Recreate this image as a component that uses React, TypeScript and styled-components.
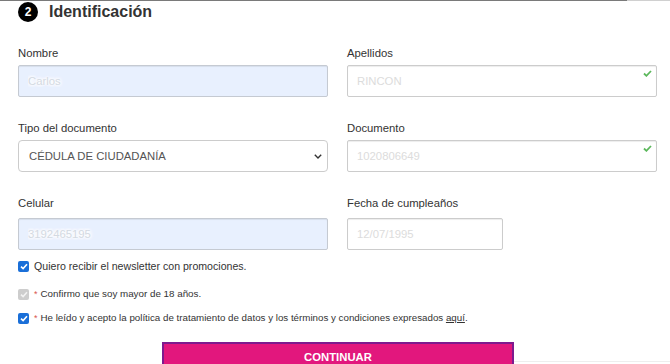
import styled, { createGlobalStyle } from "styled-components"

const GlobalStyle = createGlobalStyle`
  html, body {
    margin: 0;
    padding: 0;
    background: #FFFFFF;
    overflow: hidden;
  }

  body {
    font-family: "Liberation Sans", Arial, sans-serif;
    color: #333333;
  }
`

const TopBar = styled.div`
  display: flex;
  height: 1px;
`

const TopSegment = styled.div<{ $grow: number; $color: string }>`
  flex: ${p => p.$grow};
  background: ${p => p.$color};
`

const Section = styled.section`
  padding: 0 13px 0 18px;
`

const Heading = styled.div`
  display: flex;
  align-items: center;
  gap: 11px;
  height: 20px;
  margin-top: 1px;
`

const StepBadge = styled.span`
  width: 20px;
  height: 20px;
  border-radius: 50%;
  background: #000000;
  color: #FFFFFF;
  font-size: 12px;
  font-weight: 700;
  display: flex;
  align-items: center;
  justify-content: center;
`

const Title = styled.h2`
  margin: 0;
  font-size: 16px;
  font-weight: 700;
  color: #333333;
`

const Grid = styled.div`
  display: grid;
  grid-template-columns: 310px 310px;
  column-gap: 19px;
  row-gap: 25px;
  margin-top: 25px;
`

const Field = styled.div`
  display: flex;
  flex-direction: column;
`

const Label = styled.label<{ $space?: number }>`
  font-size: 11.3px;
  line-height: 13px;
  color: #333333;
  margin-bottom: ${p => p.$space ?? 5}px;
`

const InputWrap = styled.div<{ $width?: number }>`
  position: relative;
  width: ${p => (p.$width ? `${p.$width}px` : "100%")};
`

const Input = styled.input<{ $filled?: boolean; $blurred?: boolean }>`
  box-sizing: border-box;
  width: 100%;
  height: 32px;
  padding: 0 9px;
  border: 1px solid ${p => (p.$filled ? "#C5CAD2" : "#CCCCCC")};
  border-radius: 2px;
  box-shadow: inset 0 1px 1px rgba(0, 0, 0, 0.075);
  background: ${p => (p.$filled ? "#E8F0FE" : "#FFFFFF")};
  font-family: "Liberation Sans", Arial, sans-serif;
  font-size: 11.3px;
  color: ${p => (p.$blurred ? "#D3D9E2" : "#DCDCDC")};
  text-shadow: ${p =>
    p.$blurred
      ? "0 0 2px #FFFFFF, 0 0 3px #FFFFFF, 0 0 4px #FFFFFF, 0 0 5px #FFFFFF, 0 0 6px #FFFFFF, 0 0 6px #FFFFFF"
      : "none"};
  outline: none;
`

const Select = styled.select`
  box-sizing: border-box;
  width: 100%;
  height: 32px;
  padding: 0 10px;
  border: 1px solid #CCCCCC;
  border-radius: 4px;
  background: #FFFFFF;
  appearance: none;
  font-family: "Liberation Sans", Arial, sans-serif;
  font-size: 11.3px;
  color: #555555;
  outline: none;
`

const Chevron = styled.svg`
  position: absolute;
  right: 6px;
  top: 14px;
  pointer-events: none;
`

const ValidMark = styled.svg`
  position: absolute;
  right: 5px;
  top: 5px;
`

const Checks = styled.div`
  display: flex;
  flex-direction: column;
  margin-top: 10px;
`

const CheckRow = styled.label<{ $mt?: number; $size: number }>`
  display: flex;
  align-items: center;
  gap: 5px;
  margin-top: ${p => p.$mt ?? 0}px;
  font-size: ${p => p.$size}px;
  line-height: 13px;
  color: #333333;
`

const Box = styled.span<{ $disabled?: boolean }>`
  box-sizing: border-box;
  width: 11px;
  height: 11px;
  border-radius: 2px;
  background: ${p => (p.$disabled ? "#CDCDCD" : "#1A6FD8")};
  display: flex;
  align-items: center;
  justify-content: center;
  flex-shrink: 0;
`

const Required = styled.span`
  color: #D9534F;
  font-size: 9px;
  margin-right: 3px;
`

const Link = styled.a`
  color: #333333;
  text-decoration: underline;
`

const Footer = styled.div`
  display: flex;
  align-items: flex-end;
  margin-top: 17px;
  padding-left: 144px;
`

const SubmitButton = styled.button`
  box-sizing: border-box;
  display: block;
  flex-shrink: 0;
  width: 352px;
  height: 30px;
  border: 2px solid #7E1A8E;
  background: #E2177D;
  color: #FFFFFF;
  font-family: "Liberation Sans", Arial, sans-serif;
  font-size: 11.3px;
  font-weight: 700;
  padding: 0;
  cursor: pointer;
`

const FooterRule = styled.div`
  flex: 1;
  height: 1px;
  margin: 0 -13px 10px 0;
  background: #EEEEEE;
`

function Tick({ color }: { color: string }) {
  return (
    <svg width="8" height="7" viewBox="0 0 8 7">
      <path d="M1 3.6 L3.1 5.6 L7 1.2" fill="none" stroke={color} strokeWidth="1.6" />
    </svg>
  )
}

function Valid() {
  return (
    <ValidMark width="9" height="7" viewBox="0 0 9 7">
      <path d="M1 3.5 L3.4 5.8 L8 1" fill="none" stroke="#5CB85C" strokeWidth="1.8" />
    </ValidMark>
  )
}

export default function App() {
  return (
    <>
      <GlobalStyle />
      <TopBar>
        <TopSegment $grow={627} $color="#7A7A7A" />
        <TopSegment $grow={43} $color="#D0D0D0" />
      </TopBar>
      <Section>
        <Heading>
          <StepBadge>2</StepBadge>
          <Title>Identificación</Title>
        </Heading>

        <Grid>
          <Field>
            <Label>Nombre</Label>
            <InputWrap>
              <Input $filled $blurred readOnly value="Carlos" />
            </InputWrap>
          </Field>
          <Field>
            <Label>Apellidos</Label>
            <InputWrap>
              <Input readOnly value="RINCON" />
              <Valid />
            </InputWrap>
          </Field>

          <Field>
            <Label>Tipo del documento</Label>
            <InputWrap>
              <Select defaultValue="cc">
                <option value="cc">CÉDULA DE CIUDADANÍA</option>
              </Select>
              <Chevron width="8" height="5" viewBox="0 0 8 5">
                <path d="M0.8 0.8 L4 4 L7.2 0.8" fill="none" stroke="#333333" strokeWidth="1.4" />
              </Chevron>
            </InputWrap>
          </Field>
          <Field>
            <Label>Documento</Label>
            <InputWrap>
              <Input readOnly value="1020806649" />
              <Valid />
            </InputWrap>
          </Field>

          <Field>
            <Label $space={8}>Celular</Label>
            <InputWrap>
              <Input $filled $blurred readOnly value="3192465195" />
            </InputWrap>
          </Field>
          <Field>
            <Label $space={8}>Fecha de cumpleaños</Label>
            <InputWrap $width={156}>
              <Input readOnly value="12/07/1995" />
            </InputWrap>
          </Field>
        </Grid>

        <Checks>
          <CheckRow $size={10.6}>
            <Box><Tick color="#FFFFFF" /></Box>
            Quiero recibir el newsletter con promociones.
          </CheckRow>
          <CheckRow $mt={14} $size={9.8}>
            <Box $disabled><Tick color="#F2F2F2" /></Box>
            <span><Required>*</Required>Confirmo que soy mayor de 18 años.</span>
          </CheckRow>
          <CheckRow $mt={10} $size={9.75}>
            <Box><Tick color="#FFFFFF" /></Box>
            <span>
              <Required>*</Required>He leído y acepto la política de tratamiento de datos y los términos y condiciones expresados <Link href="#">aquí</Link>.
            </span>
          </CheckRow>
        </Checks>

        <Footer>
          <SubmitButton>CONTINUAR</SubmitButton>
          <FooterRule />
        </Footer>
      </Section>
    </>
  )
}
